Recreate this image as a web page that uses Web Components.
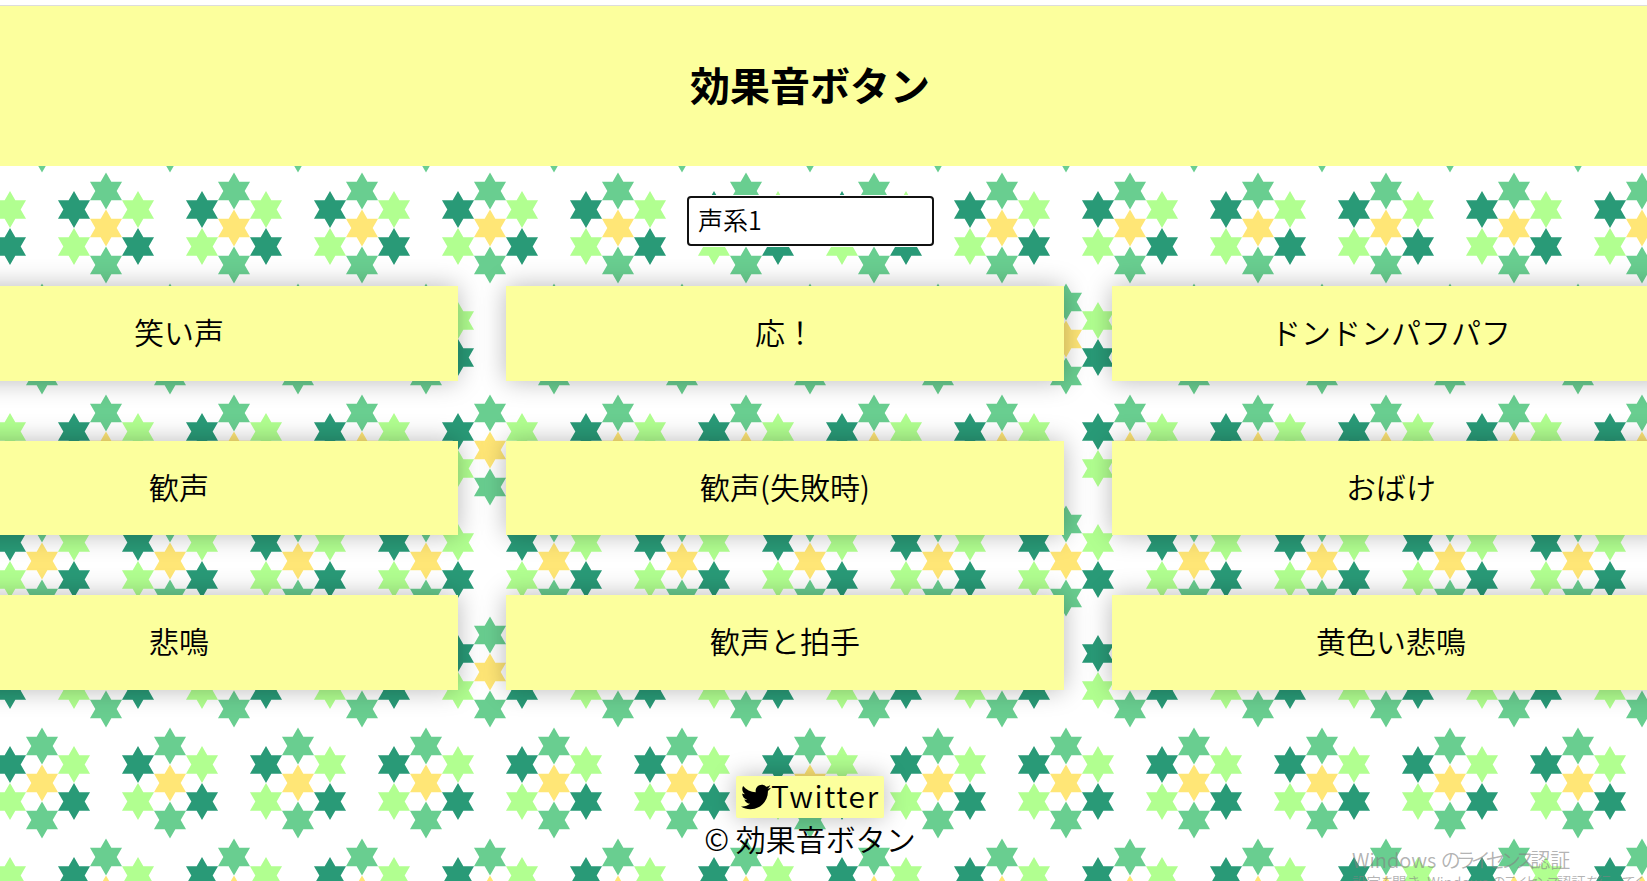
<!DOCTYPE html>
<html lang="ja">
<head>
<meta charset="utf-8">
<title>効果音ボタン</title>
<style>
html,body{margin:0;height:881px;overflow:hidden;background:#fff;font-family:"Noto Sans CJK JP DemiLight","Noto Sans CJK JP",sans-serif;font-weight:350;color:#000}
</style>
</head>
<body>
<sound-page></sound-page>
<script>
const define = (name, html) => customElements.define(name, class extends HTMLElement {
  constructor() {
    super();
    this.attachShadow({ mode: 'open' }).innerHTML = html;
  }
});

// Six-pointed star, 32 x 37, centred on the given point
const star = (x, y, c) => {
  const pts = [];
  for (let i = 0; i < 12; i++) {
    const r = i % 2 ? 18.5 / Math.sqrt(3) : 18.5, a = Math.PI * (i / 6 - 0.5);
    pts.push((x + r * Math.cos(a)).toFixed(2) + ',' + (y + r * Math.sin(a)).toFixed(2));
  }
  return `<polygon points="${pts.join(' ')}" fill="${c}"/>`;
};
const flower = (x, y) =>
  star(x, y, '#ffe676') + star(x, y - 37, '#69ce90') + star(x, y + 37, '#69ce90') +
  star(x - 32, y - 18.5, '#299a77') + star(x + 32, y + 18.5, '#299a77') +
  star(x + 32, y - 18.5, '#b1ff90') + star(x - 32, y + 18.5, '#b1ff90');

define('star-backdrop', `
<style>:host{display:block;overflow:hidden}svg{display:block;width:100%;height:100%}</style>
<svg><defs><pattern id="p" width="128" height="222" patternUnits="userSpaceOnUse" x="-22" y="0">
${flower(64, 111)}${flower(0, 0)}${flower(128, 0)}${flower(0, 222)}${flower(128, 222)}
</pattern></defs><rect width="100%" height="100%" fill="url(#p)"/></svg>`);

define('site-header', `
<style>:host{display:flex;height:160px;background:#fcff9d}
h1{margin:0;padding-top:48px;width:1620px;text-align:center;font-family:"Noto Sans CJK JP",sans-serif;font-size:40px;line-height:60px;font-weight:700}</style>
<h1><slot></slot></h1>`);

define('category-select', `
<style>:host{display:block;box-sizing:border-box;width:247px;height:50px;padding:0 9px;border:2px solid #111;border-radius:4px;background:#fff;box-shadow:0 0 0 1px #fff;font-size:25px;line-height:43px}</style>
<slot></slot>`);

define('sound-button', `
<style>:host{display:flex;align-items:center;justify-content:center;box-sizing:border-box;padding-bottom:5px;background:#fcff9d;box-shadow:0 0 24px rgba(0,0,0,.28);font-size:30px;line-height:44px}</style>
<span><slot></slot></span>`);

define('sound-grid', `
<style>:host{display:grid;grid-template-columns:repeat(3,558px);grid-template-rows:95px 94px 95px;column-gap:48px;row-gap:60px;margin-left:-100px}</style>
<slot></slot>`);

define('twitter-link', `
<style>:host{display:flex;align-items:center;box-sizing:border-box;width:148px;height:42px;padding:0 5px;background:#fcff9d;border-radius:2px;box-shadow:0 0 24px rgba(0,0,0,.28);font-size:30px;line-height:42px}
svg{flex:none;width:30px;height:30px}
span{letter-spacing:1.6px;margin-top:-5px}</style>
<svg viewBox="0 0 512 512"><path d="M459.37 151.716c.325 4.548.325 9.097.325 13.645 0 138.72-105.583 298.558-298.558 298.558-59.452 0-114.68-17.219-161.137-47.106 8.447.974 16.568 1.299 25.34 1.299 49.055 0 94.213-16.568 130.274-44.832-46.132-.975-84.792-31.188-98.112-72.772 6.498.974 12.995 1.624 19.818 1.624 9.421 0 18.843-1.3 27.614-3.573-48.081-9.747-84.143-51.98-84.143-102.985v-1.299c13.969 7.797 30.214 12.67 47.431 13.319-28.264-18.843-46.781-51.005-46.781-87.391 0-19.492 5.197-37.36 14.294-52.954 51.655 63.675 129.3 105.258 216.365 109.807-1.624-7.797-2.599-15.918-2.599-24.04 0-57.828 46.782-104.934 104.934-104.934 30.213 0 57.502 12.67 76.67 33.137 23.715-4.548 46.456-13.32 66.599-25.34-7.798 24.366-24.366 44.833-46.132 57.827 21.117-2.273 41.584-8.122 60.426-16.243-14.292 20.791-32.161 39.308-52.628 54.253z"/></svg><span><slot></slot></span>`);

define('site-footer', `
<style>:host{display:flex;flex-direction:column;align-items:center;width:1620px;font-size:30px}
div{line-height:44px;margin-top:-2px}</style>
<slot name="link"></slot><div><slot></slot></div>`);

define('license-notice', `
<style>:host{display:block;color:rgba(130,130,130,.62);white-space:nowrap}
div{font-size:20px;line-height:28px}
p{margin:-2px 0 0;font-size:14.5px;line-height:20px}
i{font-style:normal;letter-spacing:-5px}
p i{letter-spacing:-3.6px}</style>
<div>Windows <i>のライセンス</i>認証</div>
<p>設定<i>を</i>開<i>き、</i>Windows <i>のライセンス</i>認証<i>を</i>行<i>ってく</i></p>`);

define('sound-page', `
<style>:host{display:grid;height:881px;overflow:hidden;grid-template:881px/1647px}
star-backdrop,main{grid-area:1/1;min-width:0}
star-backdrop{margin-top:6px}
main{display:flex;flex-direction:column;height:881px;overflow:hidden;position:relative}
.line{flex:none;height:5px;background:#fff;border-bottom:1px solid #ddd}
site-header{flex:none}
category-select{margin:30px 0 40px 687px;flex:none}
sound-grid{flex:none}
site-footer{margin-top:86px;flex:none}
license-notice{position:absolute;left:1352px;top:846px}</style>
<star-backdrop></star-backdrop>
<main>
<div class="line"></div>
<site-header>効果音ボタン</site-header>
<category-select>声系1</category-select>
<sound-grid>
<sound-button>笑い声</sound-button><sound-button>応！</sound-button><sound-button>ドンドンパフパフ</sound-button>
<sound-button>歓声</sound-button><sound-button>歓声(失敗時)</sound-button><sound-button>おばけ</sound-button>
<sound-button>悲鳴</sound-button><sound-button>歓声と拍手</sound-button><sound-button>黄色い悲鳴</sound-button>
</sound-grid>
<site-footer><twitter-link slot="link">Twitter</twitter-link>© 効果音ボタン</site-footer>
<license-notice></license-notice>
</main>`);
</script>
</body>
</html>
